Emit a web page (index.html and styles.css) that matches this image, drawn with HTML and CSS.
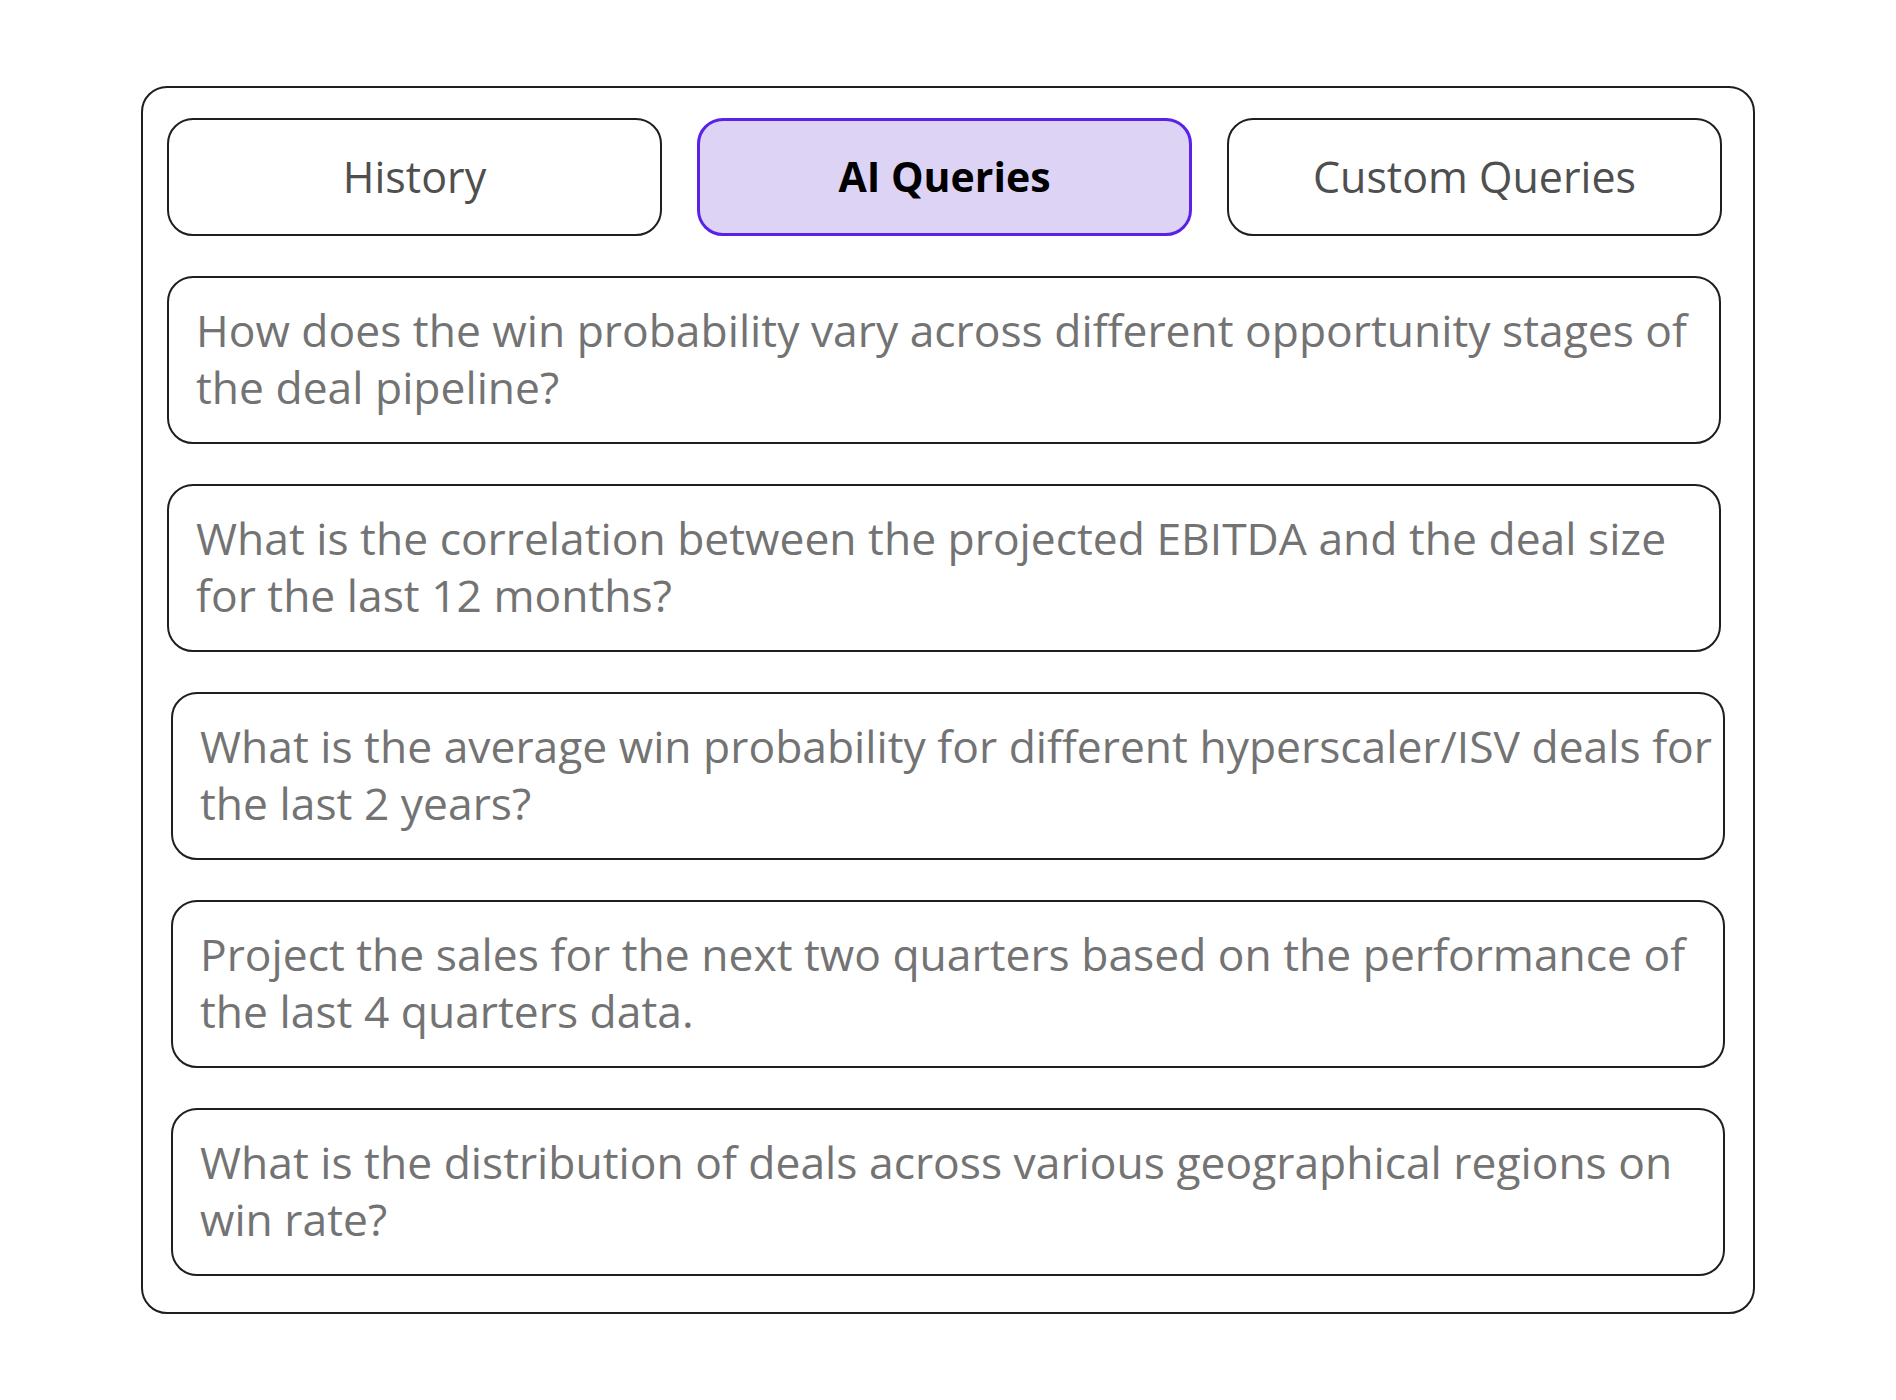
FILE: index.html
```html
<!DOCTYPE html>
<html lang="en">
<head>
<meta charset="utf-8">
<title>AI Queries</title>
<link rel="stylesheet" href="styles.css">
</head>
<body>
  <div class="panel">
    <div class="tabs">
      <div class="tab">History</div>
      <div class="tab tab-active">AI Queries</div>
      <div class="tab">Custom Queries</div>
    </div>
    <div class="queries">
      <div class="query">How does the win probability vary across different opportunity stages of<br>the deal pipeline?</div>
      <div class="query">What is the correlation between the projected EBITDA and the deal size<br>for the last 12 months?</div>
      <div class="query query-shift">What is the average win probability for different hyperscaler/ISV deals for<br>the last 2 years?</div>
      <div class="query query-shift">Project the sales for the next two quarters based on the performance of<br>the last 4 quarters data.</div>
      <div class="query query-shift">What is the distribution of deals across various geographical regions on<br>win rate?</div>
    </div>
  </div>
</body>
</html>
```

FILE: styles.css
```css
html, body {
  margin: 0;
  padding: 0;
  background: #ffffff;
}

body {
  font-family: "Open Sans", "Noto Sans", sans-serif;
  padding: 86px 0 0 141px;
}

.panel {
  box-sizing: border-box;
  width: 1614px;
  height: 1228px;
  border: 2px solid #1e1e1e;
  border-radius: 26px;
  padding: 30px 32px 0 24px;
}

.tabs {
  display: grid;
  grid-template-columns: repeat(3, 495px);
  column-gap: 35px;
}

.tab {
  box-sizing: border-box;
  height: 118px;
  border: 2px solid #1e1e1e;
  border-radius: 26px;
  display: flex;
  align-items: center;
  justify-content: center;
  padding-bottom: 1px;
  font-size: 43px;
  line-height: 57px;
  color: #4f4f4f;
  white-space: nowrap;
}

.tab-active {
  border: 3px solid #5b21e6;
  background: #ddd3f5;
  color: #000000;
  font-weight: 700;
  font-size: 41px;
}

.queries {
  display: flex;
  flex-direction: column;
  gap: 40px;
  margin-top: 40px;
}

.query {
  box-sizing: border-box;
  width: 1554px;
  height: 168px;
  border: 2px solid #1e1e1e;
  border-radius: 26px;
  padding: 24px 0 0 27px;
  font-size: 44.4px;
  line-height: 57px;
  color: #737373;
  white-space: nowrap;
}

.query-shift {
  margin-left: 4px;
}
```
